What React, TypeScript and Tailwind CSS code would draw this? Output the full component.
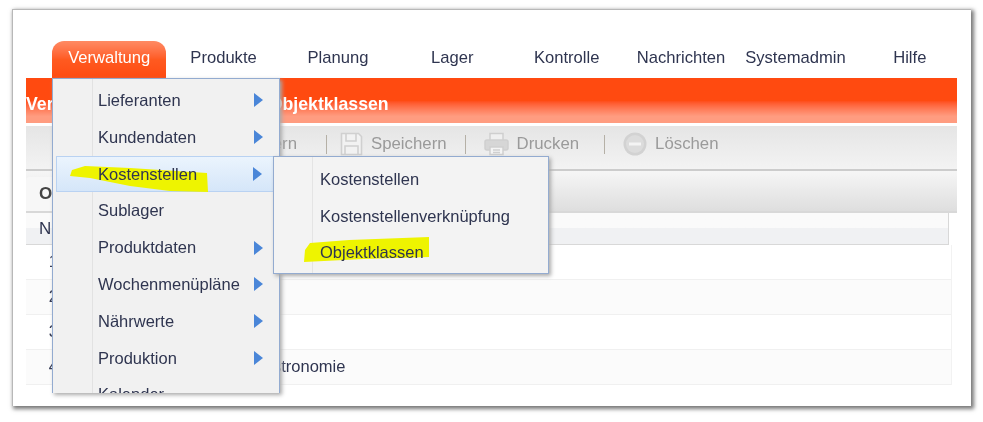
const navItems = ["Verwaltung", "Produkte", "Planung", "Lager", "Kontrolle", "Nachrichten", "Systemadmin", "Hilfe"];

const mainMenu = [
  { label: "Lieferanten", sub: true },
  { label: "Kundendaten", sub: true },
  { label: "Kostenstellen", sub: true, active: true },
  { label: "Sublager", sub: false },
  { label: "Produktdaten", sub: true },
  { label: "Wochenmenüpläne", sub: true },
  { label: "Nährwerte", sub: true },
  { label: "Produktion", sub: true },
  { label: "Kalender", sub: false },
];

const rows = [
  { id: 1, name: "" },
  { id: 2, name: "" },
  { id: 3, name: "" },
  { id: 4, name: "Gastronomie" },
];

function SaveIcon() {
  return (
    <svg width="23" height="24" viewBox="0 0 23 24" fill="none" stroke="#d0d0d0" strokeWidth="1.6">
      <path d="M1.5 1.5h17l3 3v18h-20z" fill="#f2f2f2" />
      <path d="M6 2v7h10V2M5 22v-8h13v8" />
    </svg>
  );
}

function PrintIcon() {
  return (
    <svg width="25" height="24" viewBox="0 0 25 24" fill="none" stroke="#cfcfcf" strokeWidth="1.5">
      <path d="M6 8V1.5h13V8" fill="#f0f0f0" />
      <rect x="1" y="8" width="23" height="10" rx="2" fill="#d6d6d6" />
      <path d="M6 15h13v7.5H6z" fill="#f4f4f4" />
      <path d="M9 18h7M9 20.5h7" />
    </svg>
  );
}

function DeleteIcon() {
  return (
    <svg width="24" height="24" viewBox="0 0 24 24">
      <circle cx="12" cy="12" r="11.5" fill="#d2d2d2" />
      <circle cx="12" cy="12" r="9" fill="#dcdcdc" />
      <rect x="6" y="10.5" width="12" height="3" fill="#f4f4f4" />
    </svg>
  );
}

function ToolbarButton({ icon, label, className }: { icon: React.ReactNode; label: string; className: string }) {
  return (
    <div className={`flex items-center gap-[8px] ${className}`}>
      {icon}
      <span className="text-[16.8px] text-[#9a9a9a]">{label}</span>
    </div>
  );
}

function MenuArrow() {
  return (
    <svg width="9" height="14" viewBox="0 0 9 14" className="absolute right-[13px] top-1/2 -translate-y-1/2">
      <path d="M0 0l9 7-9 7z" fill="#4a86d8" />
    </svg>
  );
}

function Marker({ className, d, width, height }: { className: string; d: string; width: number; height: number }) {
  return (
    <svg width={width} height={height} viewBox={`0 0 ${width} ${height}`} className={`absolute ${className}`}>
      <path d={d} fill="#eef400" />
    </svg>
  );
}

export default function App() {
  return (
    <div className="h-[422px] w-[983px] overflow-hidden bg-white font-['Liberation_Sans',Arial,sans-serif] text-[#2f3550]">
      <div className="relative ml-[12px] mt-[9px] h-[397px] w-[959px] overflow-hidden border-l border-t border-[#b8b8b8] bg-white shadow-[2px_2px_4px_1px_#777] blur-[0.4px]">
        <div className="ml-[39px] mt-[31px] grid h-[37px] w-[915px] grid-cols-8">
          {navItems.map((item, index) => (
            <div
              key={item}
              className={
                index === 0
                  ? "flex items-center justify-center rounded-t-[12px] bg-gradient-to-b from-[#ff8a63] via-[#ff5a20] to-[#ff4a10] pb-[2px] text-[16.6px] text-white"
                  : "flex items-center justify-center pb-[2px] text-[16.6px]"
              }
            >
              {item}
            </div>
          ))}
        </div>

        <div className="ml-[13px] h-[45px] w-[931px] overflow-hidden whitespace-nowrap bg-gradient-to-b from-[#ff4a10] from-50% to-[#ff9c80] to-85% pt-[15px] text-[17.7px] font-bold leading-[22px] text-white">
          <span>Verwaltung &gt; Kostenstellen &gt;</span>
          <span className="ml-[-3px]">Objektklassen</span>
        </div>

        <div className="ml-[13px] mt-[3px] flex h-[45px] w-[931px] items-center border-b-2 border-[#cccccc] bg-gradient-to-b from-[#e5e5e5] to-[#f3f3f3] pb-[7px] text-[#9a9a9a]">
          <span className="ml-[213px] w-[58px] text-right text-[16.8px]">Ändern</span>
          <div className="ml-[29px] h-[19px] w-px bg-[#b5b0a6]" />
          <ToolbarButton icon={<SaveIcon />} label="Speichern" className="ml-[13px]" />
          <div className="ml-[18px] h-[19px] w-px bg-[#b5b0a6]" />
          <ToolbarButton icon={<PrintIcon />} label="Drucken" className="ml-[18px]" />
          <div className="ml-[25px] h-[19px] w-px bg-[#b5b0a6]" />
          <ToolbarButton icon={<DeleteIcon />} label="Löschen" className="ml-[18px]" />
        </div>

        <div className="ml-[13px] flex h-[42px] w-[931px] border-b-2 border-[#d8d8d8] bg-gradient-to-b from-[#f6f6f6] to-[#dedede]">
          <div className="mt-[6px] flex h-[34px] w-[60px] items-center rounded-t-[4px] bg-[#f7f7f7] pl-[13px] text-[17px] font-bold text-[#444444]">
            O
          </div>
        </div>

        <div className="ml-[13px] flex h-[32px] w-[923px] items-center border-b border-r border-[#d8d8d8] bg-gradient-to-b from-[#fafafa] from-50% to-[#f0f1f3] to-50% pl-[13px] text-[17px]">
          N
        </div>

        <div className="ml-[13px] w-[926px] border-r border-[#f2f2f2]">
          {rows.map((row) => (
            <div
              key={row.id}
              className={`flex h-[35px] items-center border-b border-[#f0f0f0] pb-[1px] text-[16.5px] ${row.id % 2 === 0 ? "bg-[#fbfbfb]" : "bg-white"}`}
            >
              <span className="w-[32px] text-right">{row.id}</span>
              <span className="ml-[193px]">{row.name}</span>
            </div>
          ))}
        </div>

        {/* Verwaltung dropdown */}
        <div className="absolute left-[39px] top-[68px] h-[315px] w-[228px] overflow-hidden border-x border-t border-[#93abd0] bg-[#f1f1f1] shadow-[2px_2px_4px_#aaa]">
          <div className="absolute bottom-0 left-[39px] top-0 w-px bg-[#e2e2e2]" />
          <div className="pt-[3px]">
            {mainMenu.map((item) => (
              <div
                key={item.label}
                className={`relative mx-[3px] flex h-[36.8px] items-center text-[16.5px] ${
                  item.active ? "border border-[#b9d2f2] bg-gradient-to-b from-[#ebf4fd] to-[#d5e6f9] pl-[41px]" : "pl-[42px]"
                }`}
              >
                <span className="relative z-10">{item.label}</span>
                {item.sub ? <MenuArrow /> : null}
              </div>
            ))}
          </div>
          <Marker
            className="left-[17px] top-[86px]"
            width={140}
            height={28}
            d="M2 5 L15 1 L60 3 L137 8 L138 27 L100 26 L60 21 L20 13 L0 11z"
          />
        </div>

        {/* Kostenstellen flyout */}
        <div className="absolute left-[260px] top-[146px] h-[118px] w-[276px] border border-[#93abd0] bg-[#f3f3f3] shadow-[2px_2px_4px_#aaa]">
          <div className="absolute bottom-0 left-[38px] top-0 w-px bg-[#e4e4e4]" />
          <div className="pt-[4px]">
            {["Kostenstellen", "Kostenstellenverknüpfung", "Objektklassen"].map((label) => (
              <div key={label} className="relative z-10 flex h-[36.6px] items-center pl-[46px] text-[16.5px]">
                {label}
              </div>
            ))}
          </div>
          <Marker
            className="left-[30px] top-[80px]"
            width={126}
            height={26}
            d="M1 13 L6 6 L45 3 L125 0 L125 20 L60 22 L20 24 L0 25z"
          />
        </div>
      </div>
    </div>
  );
}
